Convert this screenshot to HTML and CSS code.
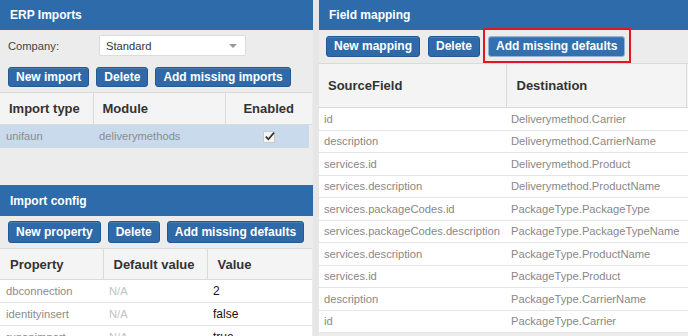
FILE: index.html
```html
<!DOCTYPE html>
<html>
<head>
<meta charset="utf-8">
<link rel="stylesheet" href="styles.css">
</head>
<body>
<div class="layout">
  <div class="panel left">
    <section class="section erp">
      <div class="panel-head">ERP Imports</div>
      <div class="company-row">
        <label class="company-label">Company:</label>
        <div class="select"><span>Standard</span><span class="caret"></span></div>
      </div>
      <div class="toolbar t1">
        <button class="btn">New import</button>
        <button class="btn">Delete</button>
        <button class="btn">Add missing imports</button>
      </div>
      <table class="grid imports">
        <colgroup><col class="c1"><col class="c2"><col></colgroup>
        <thead><tr><th>Import type</th><th>Module</th><th class="center">Enabled</th></tr></thead>
        <tbody>
          <tr class="selected"><td>unifaun</td><td>deliverymethods</td><td class="center"><span class="check"><svg width="11" height="11" viewBox="0 0 11 11"><path d="M1.8 5.6 L4.4 8.2 L10 1.6" fill="none" stroke="#333" stroke-width="1.7"/></svg></span></td></tr>
        </tbody>
      </table>
    </section>
    <section class="section config">
      <div class="panel-head">Import config</div>
      <div class="toolbar t2">
        <button class="btn">New property</button>
        <button class="btn">Delete</button>
        <button class="btn">Add missing defaults</button>
      </div>
      <table class="grid props">
        <colgroup><col class="p1"><col class="p2"><col></colgroup>
        <thead><tr><th>Property</th><th>Default value</th><th>Value</th></tr></thead>
        <tbody>
          <tr><td class="muted">dbconnection</td><td class="na">N/A</td><td class="val">2</td></tr>
          <tr><td class="muted">identityinsert</td><td class="na">N/A</td><td class="val">false</td></tr>
          <tr><td class="muted">runanimport</td><td class="na">N/A</td><td class="val">true</td></tr>
        </tbody>
      </table>
    </section>
  </div>
  <div class="panel right">
    <div class="panel-head">Field mapping</div>
    <div class="toolbar t3">
      <button class="btn">New mapping</button>
      <button class="btn">Delete</button>
      <button class="btn focused">Add missing defaults</button>
    </div>
    <table class="grid mapping">
      <colgroup><col class="m1"><col class="m2"><col class="m3"></colgroup>
      <thead><tr><th>SourceField</th><th>Destination</th><th></th></tr></thead>
      <tbody>
        <tr><td>id</td><td>Deliverymethod.Carrier</td><td></td></tr>
        <tr><td>description</td><td>Deliverymethod.CarrierName</td><td></td></tr>
        <tr><td>services.id</td><td>Deliverymethod.Product</td><td></td></tr>
        <tr><td>services.description</td><td>Deliverymethod.ProductName</td><td></td></tr>
        <tr><td>services.packageCodes.id</td><td>PackageType.PackageType</td><td></td></tr>
        <tr><td>services.packageCodes.description</td><td>PackageType.PackageTypeName</td><td></td></tr>
        <tr><td>services.description</td><td>PackageType.ProductName</td><td></td></tr>
        <tr><td>services.id</td><td>PackageType.Product</td><td></td></tr>
        <tr><td>description</td><td>PackageType.CarrierName</td><td></td></tr>
        <tr><td>id</td><td>PackageType.Carrier</td><td></td></tr>
      </tbody>
    </table>
  </div>
</div>
</body>
</html>
```
FILE: styles.css
```css
* { box-sizing: border-box; }
html, body { margin: 0; padding: 0; }
body {
  width: 688px;
  height: 336px;
  overflow: hidden;
  background: #e6e6e6;
  font-family: "Liberation Sans", Arial, sans-serif;
  font-size: 11.2px;
  color: #333;
}
.layout {
  display: flex;
  gap: 6px;
  height: 336px;
}
.panel {
  background: #ececec;
  display: flex;
  flex-direction: column;
}
.left { width: 313px; flex: none; }
.right { flex: 1; overflow: hidden; min-width: 0; }
.section { display: flex; flex-direction: column; flex: none; }
.erp { height: 185px; }
.panel-head {
  height: 30px;
  flex: none;
  background: #2e6bab;
  color: #fff;
  font-weight: bold;
  font-size: 12px;
  padding-left: 10px;
  display: flex;
  align-items: center;
}
.config .panel-head { height: 31px; }
.company-row {
  display: flex;
  align-items: center;
  margin-top: 5px;
  height: 21px;
}
.company-label {
  width: 99px;
  padding-left: 8px;
  color: #444;
}
.select {
  width: 147px;
  height: 21px;
  background: #fff;
  border: 1px solid #dcdcdc;
  border-radius: 2px;
  display: flex;
  align-items: center;
  justify-content: space-between;
  padding: 0 8px 0 6px;
  color: #333;
}
.caret {
  width: 0;
  height: 0;
  border-left: 4px solid transparent;
  border-right: 4px solid transparent;
  border-top: 4px solid #999;
}
.toolbar {
  display: flex;
  gap: 7px;
  flex: none;
}
.t1 { margin-top: 11px; padding-left: 8px; }
.t2 { margin-top: 5px; padding-left: 8px; gap: 7px; }
.t3 { margin-top: 6px; padding-left: 7px; gap: 8px; }
.btn {
  position: relative;
  height: 21px;
  padding: 0 7px;
  background: #2e6aa9;
  border: 1px solid #245a93;
  border-radius: 3px;
  color: #fff;
  font-family: "Liberation Sans", Arial, sans-serif;
  font-weight: bold;
  font-size: 12px;
  line-height: 19px;
  box-shadow: inset 0 1px 0 rgba(255,255,255,0.12);
}
.t1 .btn { height: 20px; }
.t2 .btn { height: 22px; }
.focused {
  background: #3270b0;
  border-color: #93b4d8;
}
.focused::after {
  content: "";
  position: absolute;
  left: -6px;
  top: -9px;
  right: -7px;
  bottom: -7px;
  border: 2px solid #e0171f;
}
.grid {
  border-collapse: collapse;
  table-layout: fixed;
  flex: none;
}
.grid th {
  background: #f4f4f4;
  font-weight: bold;
  font-size: 13px;
  color: #333;
  text-align: left;
  border-top: 1px solid #dadada;
  border-bottom: 1px solid #dadada;
  border-left: 1px solid #dadada;
  padding: 0 0 0 9px;
}
.grid th:first-child { border-left: none; }
.grid td {
  padding: 0 0 0 6px;
  white-space: nowrap;
  overflow: hidden;
  color: #8c8c8c;
}
.center { text-align: center !important; padding-left: 0 !important; }
.imports { width: 312px; margin-top: 5px; }
.imports .c1 { width: 93px; }
.imports .c2 { width: 132px; }
.imports thead tr { height: 32px; }
.imports tbody tr { height: 23px; }
.selected td { background: #c8daec; }
.selected td:last-child { background: linear-gradient(to right, #c8daec 84px, #ececec 84px); }
.check {
  display: inline-block;
  width: 12px;
  height: 12px;
  background: #f4f4f4;
  border: 1px solid #c9c9c9;
  vertical-align: middle;
  position: relative;
}
.check svg { position: absolute; left: 0; top: -1px; }
.props { width: 312px; margin-top: 5px; background: #fff; }
.props .p1 { width: 103px; }
.props .p2 { width: 104px; }
.props thead tr { height: 31px; }
.props th { padding-left: 10px; }
.props tbody tr { height: 23px; }
.props td { border-bottom: 1px solid #e4e4e4; }
.props td.na { color: #c2c2c2; padding-left: 6px; }
.props td.val { color: #111; padding-left: 6px; font-size: 12px; }
.mapping { width: 400px; margin-top: 6px; background: #fff; }
.mapping .m1 { width: 187px; }
.mapping .m2 { width: 180px; }
.mapping thead tr { height: 44px; }
.mapping th { padding-left: 9px; }
.mapping th:nth-child(2) { padding-left: 10px; }
.mapping tbody tr { height: 22.5px; }
.mapping td { border-bottom: 1px solid #e6e6e6; padding-left: 5px; color: #888; }
.mapping td:nth-child(2) { padding-left: 5px; }
```
